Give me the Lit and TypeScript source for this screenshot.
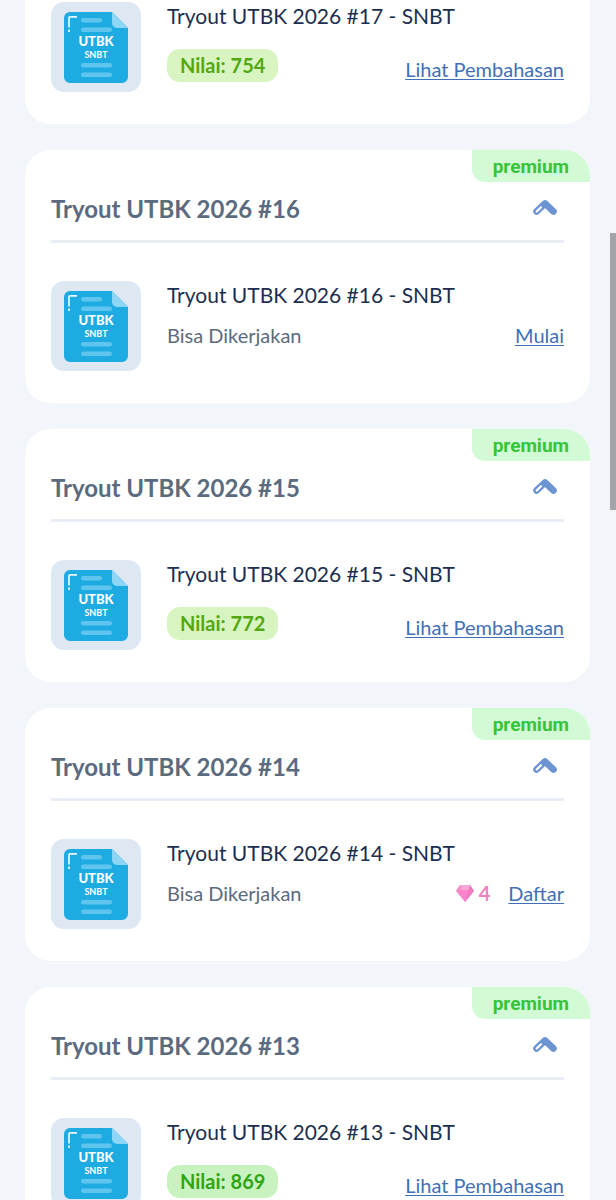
import { LitElement, html, css, svg, nothing } from "lit";
import { customElement, property, state } from "lit/decorators.js";

interface Tryout {
  number: number;
  score?: number;
  cost?: number;
  action: string;
  continued?: boolean;
}

const TRYOUTS: Tryout[] = [
  { number: 17, score: 754, action: "Lihat Pembahasan", continued: true },
  { number: 16, action: "Mulai" },
  { number: 15, score: 772, action: "Lihat Pembahasan" },
  { number: 14, cost: 4, action: "Daftar" },
  { number: 13, score: 869, action: "Lihat Pembahasan" },
];

/* Scores from this value up get the stronger green. */
const HIGH_SCORE = 800;

const documentIcon = svg`
  <svg class="document" viewBox="0 0 90 90" aria-hidden="true">
    <path d="M18 10H61L77 26V75a6 6 0 0 1-6 6H19a6 6 0 0 1-6-6V16a6 6 0 0 1 6-6Z" fill="#1eabe2"/>
    <path d="M61 10 77 26H66a5 5 0 0 1-5-5Z" fill="#8dd6f5"/>
    <g fill="#5fc5ee">
      <rect x="30" y="16" width="21" height="4.6" rx="2.3"/>
      <rect x="30" y="25.5" width="31" height="4.6" rx="2.3"/>
      <rect x="30" y="61" width="31" height="4.6" rx="2.3"/>
      <rect x="30" y="70.5" width="31" height="4.6" rx="2.3"/>
    </g>
    <path d="M26 14.8H19a1 1 0 0 0-1 1V25.5M18 27.5V30" fill="none" stroke="#e9f8ff" stroke-width="1.7"/>
    <text x="45" y="44" text-anchor="middle" class="mark">UTBK</text>
    <text x="45" y="56" text-anchor="middle" class="submark">SNBT</text>
  </svg>`;

const chevronIcon = svg`
  <svg class="chevron" viewBox="0 0 26 18" aria-hidden="true">
    <path d="M4.500 11.500 13 3.500 21.500 11.500" fill="none" stroke="#6c94d2" stroke-width="6.600" stroke-linecap="round" stroke-linejoin="round"/>
    <path d="M4.700 11.500 9 7.300" fill="none" stroke="#fff" stroke-width="2.200" stroke-linecap="round"/>
  </svg>`;

const gemIcon = svg`
  <svg class="gem" viewBox="0 0 18 17" aria-hidden="true">
    <path d="M4 0H14L18 6 9 17 0 6Z" fill="#fb83cb"/>
    <path d="M4 0H14L12.500 5H5.500Z" fill="#fba6d8"/>
    <path d="M4 0 5.500 5 0 6Z" fill="#f092c6"/>
    <path d="M14 0 12.500 5 18 6Z" fill="#e57fb9"/>
    <path d="M18 6 12.500 5 9 17Z" fill="#f578c2"/>
  </svg>`;

@customElement("tryout-card")
class TryoutCard extends LitElement {
  @property({ attribute: false }) tryout!: Tryout;
  @state() private open = true;

  static styles = css`
    :host {
      display: block;
    }
    .card {
      position: relative;
      background: #fff;
      border-radius: 26px;
      padding: 30px 26px 32px;
      overflow: hidden;
    }
    .card.continued {
      border-radius: 0 0 26px 26px;
      padding-top: 2px;
    }
    .badge {
      position: absolute;
      top: 0;
      right: 0;
      padding: 1px 21px 0;
      background: #d2fad4;
      border-radius: 0 0 0 13px;
      color: #36c43a;
      font: 700 19px/31px Roboto, sans-serif;
    }
    .toggle {
      display: flex;
      align-items: center;
      justify-content: space-between;
      width: 100%;
      height: 63px;
      padding: 0 6px 3px 0;
      border: 0;
      border-bottom: 3px solid #e9edf6;
      background: none;
      color: #5b6b7f;
      font: 700 24px/32px Lato, sans-serif;
      text-align: left;
      cursor: pointer;
    }
    .heading {
      margin: 0;
    }
    .chevron {
      width: 26px;
      height: 18px;
      overflow: visible;
    }
    .closed .chevron {
      transform: rotate(180deg);
    }
    .row {
      display: flex;
      gap: 26px;
    }
    .heading + .row {
      margin-top: 38px;
    }
    .tile {
      flex: none;
      width: 90px;
      height: 90px;
      border-radius: 13px;
      background: #dee8f3;
    }
    .document {
      display: block;
      width: 90px;
      height: 90px;
    }
    .mark {
      fill: #fff;
      font: 900 13px Lato, sans-serif;
    }
    .submark {
      fill: #fff;
      font: 700 9px Lato, sans-serif;
    }
    .body {
      flex: 1;
      min-width: 0;
      color: #5b6b7f;
      font: 400 20px/28px Lato, sans-serif;
    }
    .name {
      margin: 0;
      color: #1c2f50;
      font: 400 21px/28px Lato, sans-serif;
    }
    .info {
      display: flex;
      align-items: flex-end;
      gap: 18px;
      margin-top: 12px;
    }
    .info.scored {
      margin-top: 19px;
    }
    .status {
      flex: 1;
    }
    .score {
      display: inline-block;
      padding: 0 13px;
      border-radius: 13px;
      background: #d8f5c1;
      color: #52a812;
      font-weight: 700;
      line-height: 33px;
      vertical-align: top;
    }
    .score.high {
      background: #c9f2c1;
      color: #2fa512;
    }
    .cost {
      display: flex;
      align-items: center;
      gap: 5px;
      color: #f27fc1;
      font-weight: 700;
    }
    .gem {
      width: 18px;
      height: 17px;
    }
    .action {
      color: #3f70b5;
      text-decoration: underline;
      text-decoration-thickness: 1px;
      text-underline-offset: 2px;
    }
    .scored .action {
      margin-bottom: -1px;
    }
  `;

  render() {
    const { number, score, cost, action, continued } = this.tryout;
    const title = `Tryout UTBK 2026 #${number}`;
    return html`
      <article class="card ${continued ? "continued" : ""} ${this.open ? "" : "closed"}">
        ${continued
          ? nothing
          : html`
              <span class="badge">premium</span>
              <h2 class="heading">
                <button class="toggle" aria-expanded=${this.open} @click=${() => (this.open = !this.open)}>
                  <span>${title}</span>${chevronIcon}
                </button>
              </h2>
            `}
        ${this.open
          ? html`
              <div class="row">
                <div class="tile">${documentIcon}</div>
                <div class="body">
                  <h3 class="name">${title} - SNBT</h3>
                  <div class="info ${score ? "scored" : ""}">
                    <div class="status">
                      ${score
                        ? html`<span class="score ${score >= HIGH_SCORE ? "high" : ""}">Nilai: ${score}</span>`
                        : "Bisa Dikerjakan"}
                    </div>
                    ${cost ? html`<span class="cost">${gemIcon}${cost}</span>` : nothing}
                    <a class="action" href="#tryout-${number}">${action}</a>
                  </div>
                </div>
              </div>
            `
          : nothing}
      </article>
    `;
  }
}

@customElement("app-root")
class AppRoot extends LitElement {
  static styles = css`
    :host {
      display: block;
      position: relative;
      height: 100vh;
      overflow: hidden;
      background: #f2f6fb;
    }
    .list {
      display: flex;
      flex-direction: column;
      gap: 26px;
      padding: 0 26px 0 25px;
    }
    .scrollbar {
      position: absolute;
      top: 233px;
      right: 0;
      width: 6px;
      height: 277px;
      background: #a3a4a7;
    }
  `;

  render() {
    return html`
      <main class="list">
        ${TRYOUTS.map((tryout) => html`<tryout-card .tryout=${tryout}></tryout-card>`)}
      </main>
      <div class="scrollbar"></div>
    `;
  }
}
